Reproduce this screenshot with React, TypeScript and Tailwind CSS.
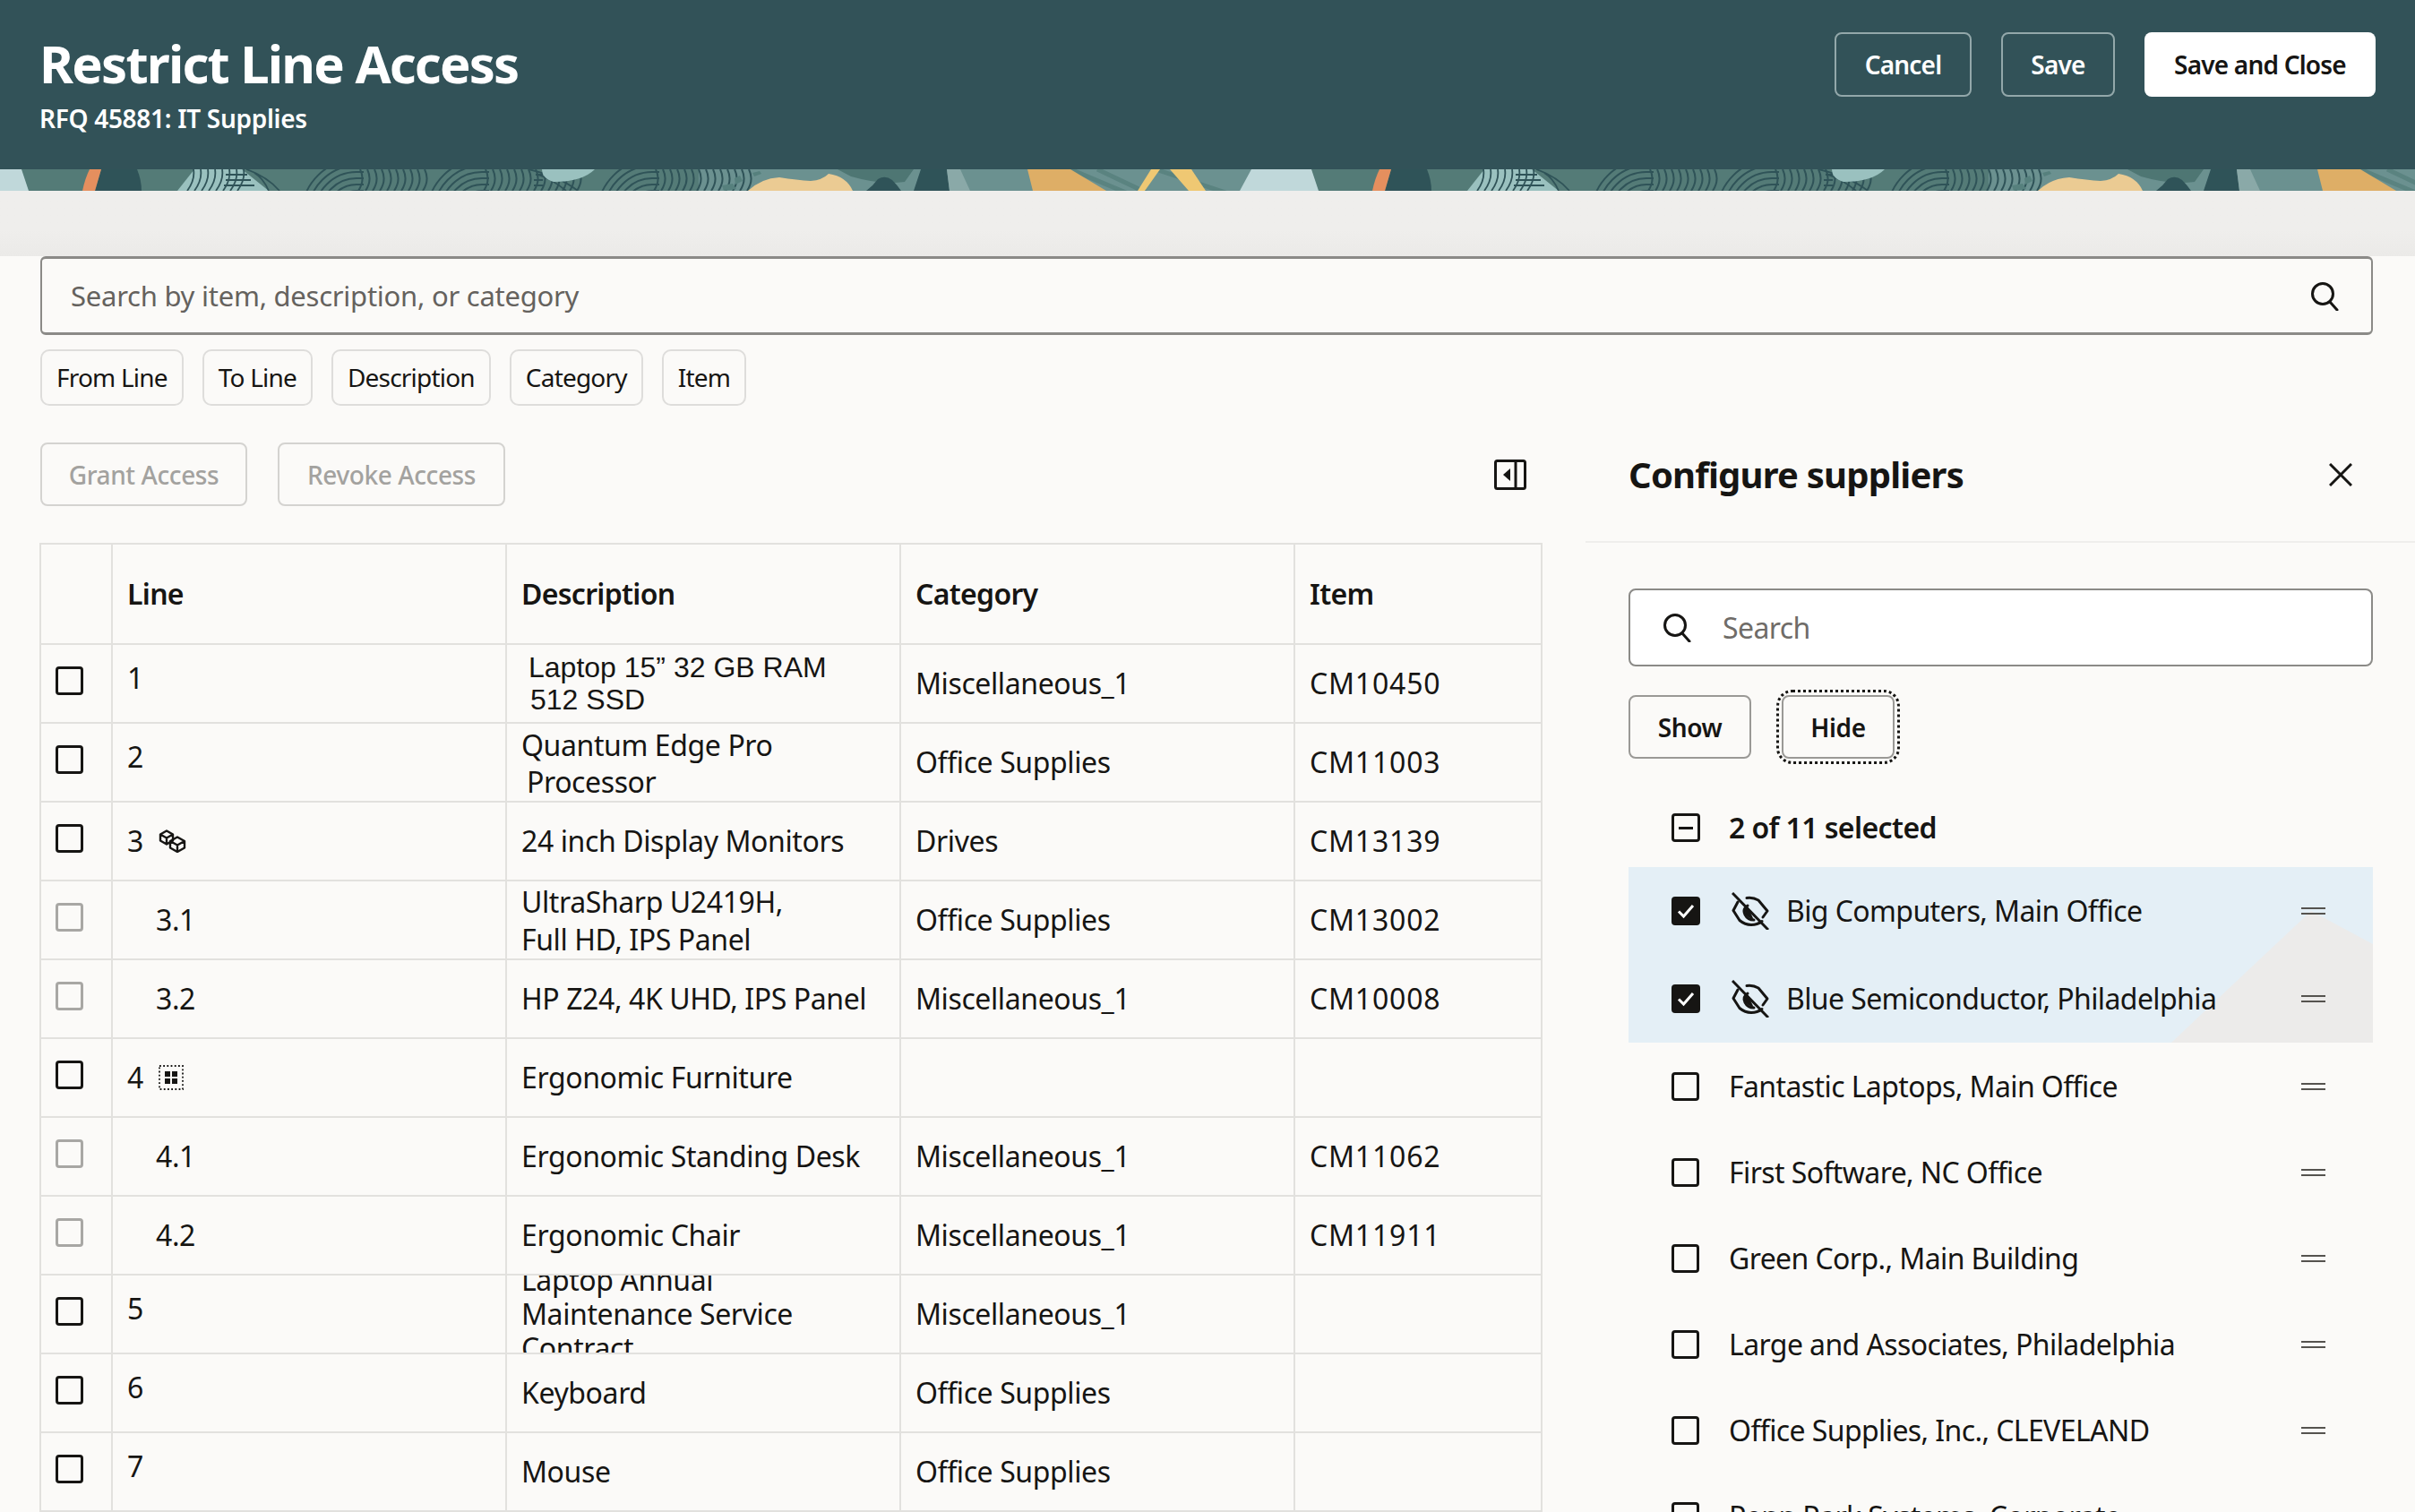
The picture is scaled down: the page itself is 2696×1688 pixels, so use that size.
const rows = [
  { line: "1", top: true, desc: <div className="pl-[8px] font-['Liberation_Sans',sans-serif] leading-[36px] tracking-normal">Laptop 15” 32 GB RAM<br /><span className="pl-[2px]">512 SSD</span></div>, category: "Miscellaneous_1", item: "CM10450" },
  { line: "2", top: true, desc: <div className="leading-[41px] pt-[1px]">Quantum Edge Pro<br /><span className="pl-[6px]">Processor</span></div>, category: "Office Supplies", item: "CM11003" },
  { line: "3", icon: "cubes", desc: "24 inch Display Monitors", category: "Drives", item: "CM13139" },
  { line: "3.1", child: true, desc: <div className="leading-[42px] pt-[1px]">UltraSharp U2419H,<br />Full HD, IPS Panel</div>, category: "Office Supplies", item: "CM13002" },
  { line: "3.2", child: true, desc: "HP Z24, 4K UHD, IPS Panel", category: "Miscellaneous_1", item: "CM10008" },
  { line: "4", icon: "dots", desc: "Ergonomic Furniture", category: "", item: "" },
  { line: "4.1", child: true, desc: "Ergonomic Standing Desk", category: "Miscellaneous_1", item: "CM11062" },
  { line: "4.2", child: true, desc: "Ergonomic Chair", category: "Miscellaneous_1", item: "CM11911" },
  { line: "5", top: true, desc: <div className="leading-[38px]">Laptop Annual<br />Maintenance Service<br />Contract</div>, category: "Miscellaneous_1", item: "" },
  { line: "6", top: true, desc: "Keyboard", category: "Office Supplies", item: "" },
  { line: "7", top: true, desc: "Mouse", category: "Office Supplies", item: "" },
];

const suppliers = [
  "Fantastic Laptops, Main Office",
  "First Software, NC Office",
  "Green Corp., Main Building",
  "Large and Associates, Philadelphia",
  "Office Supplies, Inc., CLEVELAND",
  "Penn Park Systems, Corporate",
];

const SearchIcon = () => (
  <svg width="32" height="33" viewBox="0 0 32 33" fill="none" stroke="#161513" strokeWidth="3">
    <circle cx="14" cy="14" r="11.5" />
    <path d="M22 23l8 9" strokeLinecap="round" />
  </svg>
);

const Checkbox = ({ muted }: { muted?: boolean }) => (
  <div className={`w-[31px] h-[32px] rounded-[4px] border-[3px] ${muted ? "border-[#a8a7a4]" : "border-[#161513]"}`} />
);

const CubesIcon = () => (
  <svg width="32" height="26" viewBox="0 0 32 26" fill="none" stroke="#161513" strokeWidth="2.4" strokeLinejoin="round">
    <path d="M9 1.5l7 4v7l-7 4-7-4v-7zM2 5.5l7 4 7-4M9 9.5v7" />
    <path d="M21 8.5l8 4.5v7.5l-8 4.5-8-4.5V13zM13 13l8 4.5 8-4.5M21 17.500v7.500" />
  </svg>
);

const DotsIcon = () => (
  <svg width="28" height="28" viewBox="0 0 28 28" fill="#161513">
    <rect x="1" y="1" width="26" height="26" fill="none" stroke="#161513" strokeWidth="1.800" strokeDasharray="1.800 2.400" />
    <rect x="7" y="7" width="6" height="6" />
    <rect x="15" y="7" width="6" height="6" />
    <rect x="7" y="15" width="6" height="6" />
    <rect x="15" y="15" width="6" height="6" />
  </svg>
);

const EyeOffIcon = () => (
  <svg width="42" height="42" viewBox="0 0 42 42" fill="none" stroke="#161513" strokeWidth="3" strokeLinecap="round" strokeLinejoin="round" className="shrink-0">
    <path d="M1 1l40 41" strokeLinecap="butt" />
    <path d="M7 11L2 20.500l7 11q6 5 13 5t12-4" />
    <path d="M17 6.500q7-1 13 2.500l10 12-5 7" />
    <path d="M17.500 15q-4 4-2 9t9 6z" fill="#161513" stroke="none" />
    <path d="M18 15q-6 4-3 10t10 6" />
  </svg>
);

const DragHandle = () => (
  <div className="w-[27px] h-[8px] border-y-2 border-[#55534f] shrink-0" />
);

const fingerprint = (x0: number, lines: number) => (
  <g fill="none" stroke="#2f5358" strokeWidth="2">
    {[26, 33, 40, 47, 54, 61].map((r) => (
      <path key={r} d={`M${x0 + 58 - r} 50 A${r} ${r} 0 0 1 ${x0 + 58} ${50 - r} L${x0 + 66} ${50 - r}`} />
    ))}
    {Array.from({ length: lines }).map((_, i) => (
      <path key={i} d={`M${x0 + 62 + i * 8} 0 Q${x0 + 68 + i * 8} 12 ${x0 + 60 + i * 8} 24`} />
    ))}
  </g>
);

// the artwork repeats every 1440px
const BannerBase = () => (
  <>
    <rect x="0" y="0" width="780" height="24" fill="#547b77" />
    <rect x="780" y="0" width="660" height="24" fill="#6b9190" />
  </>
);

const BannerTile = () => (
  <>
    {/* left shapes */}
    <path d="M113 0H153Q158 12 158 24H106Z" fill="#2f5358" />
    <path d="M100 0H113L106 24H92Q95 10 100 0Z" fill="#e58f5e" />
    <path d="M217 0H270L300 24H198Z" fill="#9ac1bf" />
    <g fill="none" stroke="#2f5358" strokeWidth="1.800">
      {[212, 220, 228, 236, 244, 252, 260, 268].map((x) => (
        <path key={x} d={`M${x + 4} 0Q${x + 6} 12 ${x - 3} 24`} />
      ))}
      <path d="M252 6H276M252 12H280M250 18H284" />
      <path d="M275 0Q298 8 312 24M284 4Q294 10 300 24" />
      <path d="M590 0Q625 8 645 24M600 6Q615 10 632 24" />
      <path d="M598 6H606M596 12H606M596 18H606" />
    </g>
    {fingerprint(340, 10)}
    {fingerprint(480, 14)}
    {fingerprint(670, 14)}
    <path d="M605 0H664Q650 14 618 14Q605 10 605 0Z" fill="#9ac1bf" />
    {/* middle shapes */}
    <path d="M820 10l6-3 3 6-8 4zM806 18l12-2 4 6-14 2zM840 4l8-2 2 3-8 3z" fill="#56807d" />
    <path d="M935 0H1020L1010 14Q985 18 950 8Z" fill="#4e7673" />
    <path d="M835 24Q850 10 870 9Q890 12 905 13Q918 12 925 5Q945 8 952 24Z" fill="#ebcb93" />
    <path d="M967 24Q975 18 980 11Q988 6 996 12Q1002 18 1006 24Z" fill="#2f5358" />
    <path d="M1028 0H1057L1060 24H1020Z" fill="#2f5358" />
    <path d="M1057 0H1072L1083 24H1060Z" fill="#8aa9a8" />
    {/* right shapes */}
    <path d="M1195 0L1290 40M1225 0L1330 50M1290 0L1380 30" fill="none" stroke="#5a8380" strokeWidth="5" />
    <path d="M1147 0H1195L1235 24H1153Z" fill="#deae66" />
    <path d="M1285 0H1295L1278 24H1270Z" fill="#efc873" />
    <path d="M1306 0H1330L1346 24H1327Z" fill="#efc873" />
    <path d="M1397 0H1464L1472 24H1384Z" fill="#c0d8da" />
  </>
);

const Banner = () => (
  <svg width="2696" height="24" viewBox="0 0 2696 24" className="block">
    <g><BannerBase /></g>
    <g transform="translate(1440 0)"><BannerBase /></g>
    <g transform="translate(-1440 0)"><BannerTile /></g>
    <g><BannerTile /></g>
    <g transform="translate(1440 0)"><BannerTile /></g>
  </svg>
);

const Chip = ({ label }: { label: string }) => (
  <div className="h-[63px] px-[16px] pb-[2px] flex items-center rounded-[10px] border-2 border-[#dedddb] text-[28px] tracking-[-0.8px]">
    {label}
  </div>
);

const App = () => {
  return (
    <div className="w-[2696px] h-[1688px] overflow-hidden bg-[#fbfaf8] text-[#161513] font-['Noto_Sans',sans-serif]">
      <header className="h-[189px] bg-[#325258] pl-[44px] pr-[44px] flex justify-between text-white">
        <div className="pt-[32px]">
          <h1 className="text-[58px] leading-[78px] font-bold tracking-[-1.8px]">Restrict Line Access</h1>
          <p className="text-[28px] leading-[38px] font-semibold tracking-[-0.3px] mt-[3px]">RFQ 45881: IT Supplies</p>
        </div>
        <div className="pt-[36px] flex gap-[33px] text-[28px] font-semibold tracking-[-0.8px]">
          <button className="w-[153px] h-[72px] rounded-[8px] border-2 border-[#93a8aa]">Cancel</button>
          <button className="w-[127px] h-[72px] rounded-[8px] border-2 border-[#93a8aa]">Save</button>
          <button className="w-[258px] h-[72px] rounded-[8px] bg-white text-[#161513]">Save and Close</button>
        </div>
      </header>
      <Banner />
      <div className="h-[73px] bg-gradient-to-b from-[#efeeec] from-60% to-[#ebeae8]" />

      <div className="px-[45px] pr-[47px]">
        <div className="h-[88px] rounded-[6px] border-2 border-t-[3px] border-b-[3px] border-[#8b8a87] flex items-center justify-between pl-[32px] pr-[36px]">
          <span className="text-[31px] text-[#65625e] tracking-[-0.25px]">Search by item, description, or category</span>
          <SearchIcon />
        </div>
        <div className="mt-[16px] flex gap-[21px]">
          {["From Line", "To Line", "Description", "Category", "Item"].map((c) => (
            <Chip key={c} label={c} />
          ))}
        </div>
      </div>

      <div className="mt-[41px] flex">
        <div className="w-[1771px] shrink-0 pl-[45px]">
          <div className="w-[1676px] h-[71px] flex items-center gap-[34px] text-[28px] font-medium text-[#a3a29f] tracking-[-0.4px]">
            <button className="w-[231px] h-[71px] rounded-[8px] border-2 border-[#d4d3d0]">Grant Access</button>
            <button className="w-[254px] h-[71px] rounded-[8px] border-2 border-[#d4d3d0]">Revoke Access</button>
            <svg width="36" height="34" viewBox="0 0 36 34" fill="none" stroke="#161513" strokeWidth="3" className="ml-auto mr-[17px]">
              <rect x="1.500" y="1.500" width="33" height="31" rx="2" />
              <path d="M24 2v30" />
              <path d="M18 10v14l-8-7z" fill="#161513" stroke="none" />
            </svg>
          </div>

          <table className="mt-[41px] -ml-[1px] w-[1676px] table-fixed border-collapse text-[32px] tracking-[-0.4px]">
            <colgroup>
              <col className="w-[80px]" />
              <col className="w-[440px]" />
              <col className="w-[440px]" />
              <col className="w-[440px]" />
              <col className="w-[276px]" />
            </colgroup>
            <thead>
              <tr className="h-[112px] text-left">
                <th className="border-2 border-[#e2e1de]" />
                {["Line", "Description", "Category", "Item"].map((h) => (
                  <th key={h} className="border-2 border-[#e2e1de] px-[16px] font-semibold tracking-[-0.7px]">{h}</th>
                ))}
              </tr>
            </thead>
            <tbody>
              {rows.map((r) => (
                <tr key={r.line} className="h-[88px]">
                  <td className="border-2 border-[#e2e1de] pl-[16px] align-top pt-[24px]">
                    <Checkbox muted={r.child} />
                  </td>
                  <td className={`border-2 border-[#e2e1de] ${r.child ? "pl-[48px]" : "pl-[16px]"} ${r.top ? "pb-[12px]" : ""}`}>
                    <div className="flex items-center gap-[17px]">
                      <span>{r.line}</span>
                      {r.icon === "cubes" && <CubesIcon />}
                      {r.icon === "dots" && <DotsIcon />}
                    </div>
                  </td>
                  <td className="border-2 border-[#e2e1de] px-[16px] p-0">
                    <div className="h-[86px] overflow-hidden flex items-center">{r.desc}</div>
                  </td>
                  <td className="border-2 border-[#e2e1de] px-[16px]">{r.category}</td>
                  <td className="border-2 border-[#e2e1de] px-[16px] tracking-[0.8px]">{r.item}</td>
                </tr>
              ))}
            </tbody>
          </table>
        </div>

        <aside className="flex-1 min-w-0 -ml-[1px]">
          <div className="h-[112px] border-b-2 border-[#efeeec] pl-[48px] pr-[70px] flex items-start justify-between">
            <h2 className="text-[40px] leading-[71px] font-bold tracking-[-0.8px]">Configure suppliers</h2>
            <svg width="26" height="26" viewBox="0 0 26 26" stroke="#161513" strokeWidth="3" className="mt-[23px]">
              <path d="M1 1l24 24M25 1L1 25" />
            </svg>
          </div>
          <div className="pl-[48px] pr-[47px] pt-[51px] text-[32px] tracking-[-0.6px]">
            <div className="h-[87px] bg-white rounded-[8px] border-2 border-[#8b8a87] flex items-center pl-[36px] gap-[35px]">
              <SearchIcon />
              <span className="text-[#6f6c68]">Search</span>
            </div>
            <div className="mt-[32px] flex gap-[34px] text-[28px] font-semibold tracking-[-0.4px]">
              <button className="w-[137px] h-[71px] rounded-[8px] border-2 border-[#9a9996]">Show</button>
              <div className="rounded-[12px] outline-[3px] outline-dotted outline-[#161513] outline-offset-[3px]">
                <button className="block w-[126px] h-[71px] rounded-[8px] border-2 border-[#9a9996]">Hide</button>
              </div>
            </div>
            <div className="mt-[59px] h-[36px] pl-[48px] flex items-center gap-[32px] font-semibold">
              <div className="w-[32px] h-[32px] rounded-[4px] border-[3px] border-[#161513] flex items-center justify-center">
                <div className="w-[16px] h-[3px] bg-[#161513]" />
              </div>
              <span>2 of 11 selected</span>
            </div>
            <div className="relative mt-[26px] bg-[#e4eff6] overflow-hidden">
              <div className="absolute inset-0 bg-[#ecebea] [clip-path:polygon(606px_196px,762px_49px,831px_86px,831px_196px)]" />
              {["Big Computers, Main Office", "Blue Semiconductor, Philadelphia"].map((s) => (
                <div key={s} className="relative h-[98px] pl-[48px] pr-[53px] flex items-center">
                  <div className="w-[32px] h-[32px] rounded-[4px] bg-[#161513] flex items-center justify-center">
                    <svg width="22" height="22" viewBox="0 0 22 22" fill="none" stroke="#fff" strokeWidth="3">
                      <path d="M3 11.500l5.500 5.500L19 5" />
                    </svg>
                  </div>
                  <div className="ml-[35px] mr-[19px]"><EyeOffIcon /></div>
                  <span className="flex-1">{s}</span>
                  <DragHandle />
                </div>
              ))}
            </div>
            <div className="pt-[1px]">
              {suppliers.map((s) => (
                <div key={s} className="h-[96px] pl-[48px] pr-[53px] flex items-center">
                  <Checkbox />
                  <span className="ml-[33px] flex-1">{s}</span>
                  <DragHandle />
                </div>
              ))}
            </div>
          </div>
        </aside>
      </div>
    </div>
  );
};

export default App;
